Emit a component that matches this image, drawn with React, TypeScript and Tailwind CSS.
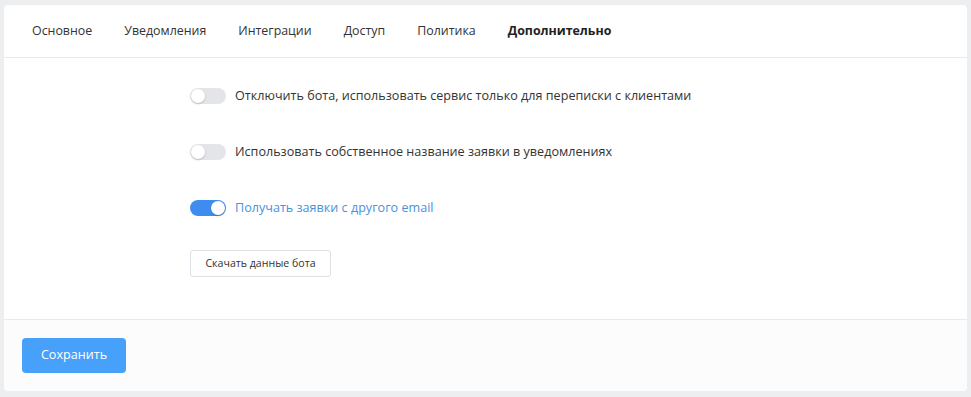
import React, { useState } from "react";

function Toggle({ on }: { on: boolean }) {
  return (
    <div
      className={
        "relative h-[16px] w-[36px] shrink-0 rounded-full " +
        (on ? "bg-[#3f8cf0]" : "bg-[#e3e5e8]")
      }
    >
      <div
        className={
          "absolute top-[1px] h-[14px] w-[14px] rounded-full bg-white shadow-[0_1px_2px_rgba(0,0,0,0.2)] " +
          (on ? "right-[1px]" : "left-[1px]")
        }
      />
    </div>
  );
}

export default function App() {
  const tabs = ["Основное", "Уведомления", "Интеграции", "Доступ", "Политика", "Дополнительно"];
  const [active] = useState(5);
  return (
    <div
      className="w-[971px] h-[397px] bg-[#eceef0] pt-[5px] pl-[4px] pr-[4px]"
      style={{ fontFamily: '"Open Sans", "Noto Sans", sans-serif' }}
    >
      <div className="w-[963px] h-[386px] bg-white rounded-[4px] flex flex-col overflow-hidden">
        <div className="h-[53px] flex items-center gap-[32px] pl-[28px] border-b border-[#e8eaec] text-[12.4px] text-[#333]">
          {tabs.map((t, i) => (
            <span key={t} className={i === active ? "font-bold text-[#222]" : ""}>
              {t}
            </span>
          ))}
        </div>
        <div className="flex-1 pl-[186px] pt-[30px] flex flex-col">
          <div className="flex items-center gap-[9px] h-[16px] text-[12.6px] text-[#333]">
            <Toggle on={false} />
            <span>Отключить бота, использовать сервис только для переписки с клиентами</span>
          </div>
          <div className="flex items-center gap-[9px] h-[16px] mt-[40px] text-[12.6px] text-[#333]">
            <Toggle on={false} />
            <span>Использовать собственное название заявки в уведомлениях</span>
          </div>
          <div className="flex items-center gap-[9px] h-[16px] mt-[40px] text-[12.6px] text-[#4a92dc]">
            <Toggle on={true} />
            <span>Получать заявки с другого email</span>
          </div>
          <div className="mt-[33px]">
            <button className="h-[27px] w-[141px] border border-[#dcdfe3] rounded-[3px] bg-white text-[10.6px] text-[#333]">
              Скачать данные бота
            </button>
          </div>
        </div>
        <div className="h-[72px] border-t border-[#e8eaec] bg-[#fcfcfc] pl-[18px] pt-[18px]">
          <button className="h-[35px] w-[104px] rounded-[4px] bg-[#47a1fb] text-white text-[12.6px]">
            Сохранить
          </button>
        </div>
      </div>
    </div>
  );
}
